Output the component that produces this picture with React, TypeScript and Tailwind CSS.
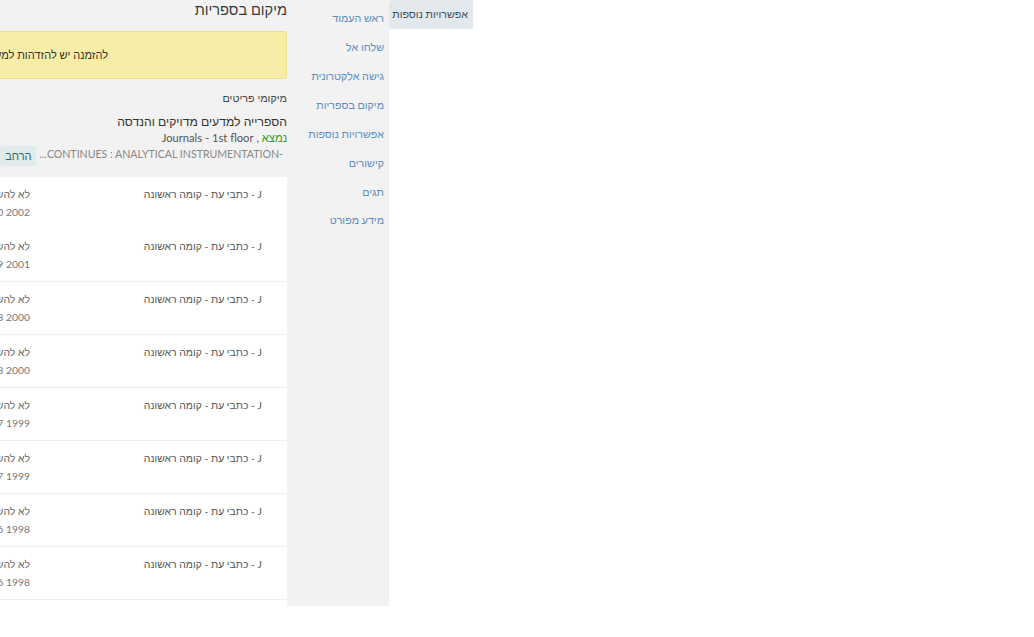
import React from "react";

const rows = [
  "v.30 2002",
  "v.29 2001",
  "v.28 2000",
  "v.28 2000",
  "v.27 1999",
  "v.27 1999",
  "v.26 1998",
  "v.26 1998",
];

const sideLinks = [
  "ראש העמוד",
  "שלחו אל",
  "גישה אלקטרונית",
  "מיקום בספריות",
  "אפשרויות נוספות",
  "קישורים",
  "תגים",
  "מידע מפורט",
];

export default function App() {
  return (
    <div
      dir="rtl"
      className="flex w-[473px] overflow-hidden bg-white text-[#333]"
      style={{ fontFamily: 'Lato, "Liberation Sans", "DejaVu Sans", sans-serif' }}
    >
      {/* tab */}
      <div className="w-[84px] shrink-0 self-start">
        <div className="flex h-[29px] items-center whitespace-nowrap rounded-l-[3px] bg-[#e3e8ec] pr-[5px] text-[10.7px] text-[#3b4f63]">
          אפשרויות נוספות
        </div>
      </div>

      {/* side nav */}
      <div className="h-[606px] w-[102px] shrink-0 bg-[#f2f2f2] pt-[4px]">
        {sideLinks.map((l) => (
          <div
            key={l}
            className="flex h-[28.86px] items-center whitespace-nowrap pr-[5px] text-[10.7px] text-[#5b8dc4]"
          >
            {l}
          </div>
        ))}
      </div>

      {/* main */}
      <div className="w-[600px] shrink-0">
        <div className="bg-[#f2f2f2] pb-[11px]">
          <div className="h-[20px] whitespace-nowrap text-[14.6px] leading-[20px] text-[#3a3a3a]">
            מיקום בספריות
          </div>
          <div className="mt-[11px] flex h-[48px] items-center whitespace-nowrap rounded-[3px] border border-[#ecdf8c] bg-[#f7eda6] pr-[178px] text-[11px] text-[#333]">
            להזמנה יש להזדהות למערכת
          </div>
          <div className="mt-[10px] whitespace-nowrap text-[10.8px] leading-[18px] text-[#444]">
            מיקומי פריטים
          </div>
          <div className="mt-[7px] whitespace-nowrap text-[12.2px] leading-[16px] text-[#333]">
            הספרייה למדעים מדויקים והנדסה
          </div>
          <div className="whitespace-nowrap text-[11.2px] leading-[16px] text-[#555]">
            <span className="text-[#2e9a2e]">נמצא</span> , Journals - 1st floor
          </div>
          <div className="flex items-start gap-[3px]">
            <div className="whitespace-nowrap pr-[4px] text-[10.6px] leading-[16px] text-[#888]">
              -CONTINUES : ANALYTICAL INSTRUMENTATION...
            </div>
            <div className="flex h-[20px] w-[36px] shrink-0 items-center justify-center rounded-[3px] bg-[#e0ecec] text-[11px] text-[#2b6a6a]">
              הרחב
            </div>
          </div>
        </div>
        <div className="bg-white">
          {rows.map((r, i) => (
            <div
              key={i}
              className={
                i === 0
                  ? "flex h-[52px] pr-[25px] pt-[8px]"
                  : "flex h-[53px] border-b border-[#eeeeee] pr-[25px] pt-[8px]"
              }
            >
              <div className="w-[232px] whitespace-nowrap text-[10.4px] leading-[18px] text-[#555]">
                J - כתבי עת - קומה ראשונה
              </div>
              <div className="flex-1 whitespace-nowrap text-[10.4px] leading-[18px]">
                <div className="text-[#666]">לא להשאלה</div>
                <div dir="ltr" className="text-right text-[#777]">{r}</div>
              </div>
            </div>
          ))}
        </div>
      </div>
    </div>
  );
}
